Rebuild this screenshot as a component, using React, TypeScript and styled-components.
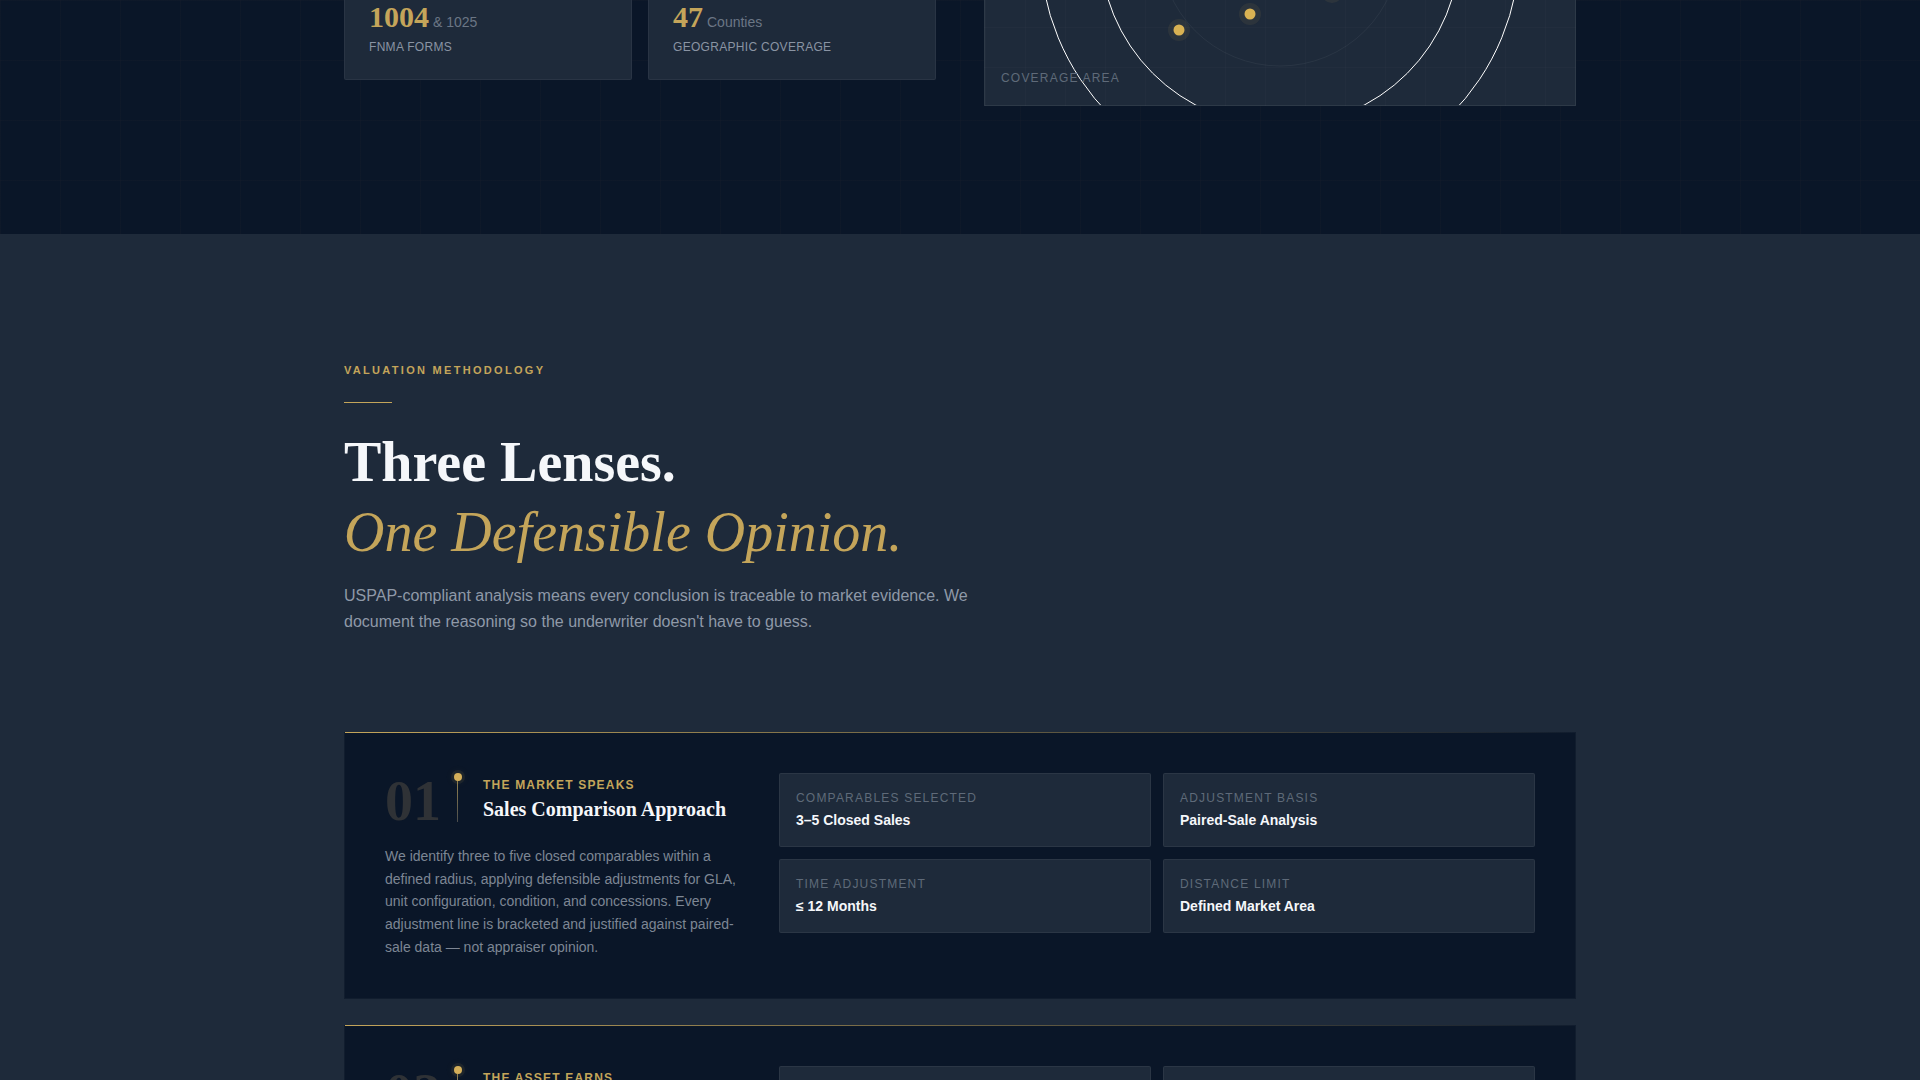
import React from "react";
import styled, { createGlobalStyle } from "styled-components";

const GlobalStyle = createGlobalStyle`
  html, body {
    margin: 0;
    padding: 0;
    background: #1e2a3a;
    font-family: "Liberation Sans", Arial, sans-serif;
  }
  * {
    box-sizing: border-box;
  }
`;

const Viewport = styled.div`
  height: 100vh;
  overflow: hidden;
`;

const Hero = styled.section`
  margin-top: -240px;
  padding: 26px 0 128px;
  background-color: #0a1628;
  background-image: linear-gradient(rgba(201, 165, 92, 0.025) 1px, transparent 1px),
    linear-gradient(90deg, rgba(201, 165, 92, 0.025) 1px, transparent 1px);
  background-size: 60px 60px;
`;

const Container = styled.div`
  width: 1280px;
  margin: 0 auto;
  padding: 0 24px;
`;

const HeroGrid = styled.div`
  display: grid;
  grid-template-columns: 1fr 1fr;
  gap: 48px;
`;

const StatColumn = styled.div`
  align-self: end;
  padding-bottom: 26px;
  display: grid;
  grid-template-columns: 1fr 1fr;
  gap: 16px;
`;

const StatCard = styled.div`
  padding: 24px 24px 23px;
  background: #1e2a3a;
  border: 1px solid rgba(255, 255, 255, 0.05);
  border-radius: 2px;
`;

const StatValue = styled.div`
  font-family: "Liberation Serif", "Times New Roman", serif;
  font-size: 30px;
  font-weight: 700;
  line-height: 32px;
  color: #c4a55a;
`;

const StatUnit = styled.span`
  margin-left: 4px;
  font-family: "Liberation Sans", Arial, sans-serif;
  font-size: 14px;
  font-weight: 400;
  color: #6b7685;
`;

const StatLabel = styled.div`
  font-size: 12px;
  line-height: 18px;
  letter-spacing: 0.3px;
  color: #8a94a3;
`;

const MapPanel = styled.div`
  position: relative;
  height: 320px;
  overflow: hidden;
  background-color: #1e2a3a;
  background-image: linear-gradient(rgba(255, 255, 255, 0.015) 1px, transparent 1px),
    linear-gradient(90deg, rgba(255, 255, 255, 0.015) 1px, transparent 1px);
  background-size: 40px 40px;
  border: 1px solid rgba(255, 255, 255, 0.07);
`;

const MapLabel = styled.span`
  position: absolute;
  left: 16px;
  bottom: 20px;
  font-size: 12px;
  line-height: 14px;
  letter-spacing: 1.2px;
  color: #5f6a79;
`;

const Methodology = styled.section`
  padding: 128px 0 0;
  background: #1e2a3a;
`;

const Eyebrow = styled.div`
  font-size: 11px;
  font-weight: 700;
  line-height: 16px;
  letter-spacing: 2.3px;
  color: #c4a55a;
`;

const Rule = styled.div`
  width: 48px;
  height: 1px;
  margin: 24px 0;
  background: #c4a55a;
`;

const Title = styled.h2`
  margin: 0;
  font-family: "Liberation Serif", "Times New Roman", serif;
  font-size: 56px;
  font-weight: 700;
  line-height: 70px;
  color: #f5f7fa;
`;

const TitleAccent = styled.em`
  display: block;
  font-weight: 400;
  color: #c4a55a;
`;

const Lead = styled.p`
  max-width: 640px;
  margin: 16px 0 0;
  font-size: 16px;
  line-height: 25.6px;
  color: #8f99a8;
`;

const MethodList = styled.div`
  display: flex;
  flex-direction: column;
  gap: 26px;
  margin-top: 98px;
`;

const MethodCard = styled.article`
  position: relative;
  display: grid;
  grid-template-columns: 354px 1fr;
  gap: 40px;
  padding: 40px;
  background: #0a1628;
  border: 1px solid rgba(255, 255, 255, 0.03);

  &::before {
    content: "";
    position: absolute;
    top: -1px;
    left: 0;
    right: 0;
    height: 1px;
    background: linear-gradient(90deg, #c4a55a, rgba(196, 165, 90, 0));
  }
`;

const MethodHead = styled.div`
  display: flex;
  align-items: flex-start;
  min-height: 60px;
`;

const MethodNumber = styled.div`
  width: 56px;
  margin-right: 12px;
  font-family: "Liberation Serif", "Times New Roman", serif;
  font-size: 56px;
  font-weight: 700;
  line-height: 56px;
  color: #2f3236;
`;

const Pin = styled.div`
  flex: none;
  display: flex;
  flex-direction: column;
  align-items: center;
  width: 10px;
  height: 49px;
  margin-right: 20px;
`;

const PinDot = styled.span`
  flex: none;
  width: 8px;
  height: 8px;
  border-radius: 50%;
  background: #d4af5a;
  box-shadow: 0 0 0 3px rgba(212, 175, 90, 0.08), 0 0 10px rgba(212, 175, 90, 0.15);
`;

const PinLine = styled.span`
  flex: 1;
  width: 1px;
  margin-right: 1px;
  background: linear-gradient(180deg, #93814f, #4a4d4d);
`;

const MethodHeading = styled.div`
  padding-top: 4px;
`;

const MethodKicker = styled.div`
  font-size: 12px;
  font-weight: 700;
  line-height: 16px;
  letter-spacing: 1.2px;
  color: #c4a55a;
`;

const MethodName = styled.h3`
  margin: 3px 0 0;
  font-family: "Liberation Serif", "Times New Roman", serif;
  font-size: 20px;
  font-weight: 700;
  line-height: 26px;
  color: #f5f7fa;
`;

const MethodText = styled.p`
  margin: 12px 0 0;
  font-size: 14px;
  line-height: 22.6px;
  color: #7d8694;
`;

const FactGrid = styled.div`
  display: grid;
  grid-template-columns: 1fr 1fr;
  grid-auto-rows: 74px;
  gap: 12px;
  align-content: start;
`;

const Fact = styled.div`
  padding: 16px;
  background: #1e2a3a;
  border: 1px solid rgba(255, 255, 255, 0.06);
  border-radius: 2px;
`;

const FactLabel = styled.div`
  font-size: 12px;
  line-height: 16px;
  letter-spacing: 1.2px;
  color: #5f6a79;
`;

const FactValue = styled.div`
  margin-top: 5px;
  font-size: 14px;
  font-weight: 700;
  line-height: 18px;
  color: #f5f7fa;
`;

const methods = [
  {
    number: "01",
    kicker: "THE MARKET SPEAKS",
    name: "Sales Comparison Approach",
    text: "We identify three to five closed comparables within a defined radius, applying defensible adjustments for GLA, unit configuration, condition, and concessions. Every adjustment line is bracketed and justified against paired-sale data — not appraiser opinion.",
    facts: [
      ["COMPARABLES SELECTED", "3–5 Closed Sales"],
      ["ADJUSTMENT BASIS", "Paired-Sale Analysis"],
      ["TIME ADJUSTMENT", "≤ 12 Months"],
      ["DISTANCE LIMIT", "Defined Market Area"],
    ],
  },
  {
    number: "02",
    kicker: "THE ASSET EARNS",
    name: "Income Approach",
    text: "",
    facts: [
      ["", ""],
      ["", ""],
    ],
  },
];

function CoverageMap() {
  const rings = [
    { r: 240, opacity: 1 },
    { r: 180, opacity: 1 },
    { r: 120, opacity: 0.05 },
  ];
  const sites = [
    [194, 243],
    [265, 227],
    [347, 205],
  ];
  return (
    <svg width="590" height="318" viewBox="0 0 590 318" fill="none">
      {rings.map((ring) => (
        <circle key={ring.r} cx="295" cy="159" r={ring.r} stroke="#fff" strokeOpacity={ring.opacity} />
      ))}
      {sites.map(([cx, cy]) => (
        <g key={cx}>
          <circle cx={cx} cy={cy} r="11" fill="#d4af5a" fillOpacity="0.08" />
          <circle cx={cx} cy={cy} r="5.5" fill="#d9b253" />
        </g>
      ))}
    </svg>
  );
}

export default function App() {
  return (
    <Viewport>
      <GlobalStyle />
      <Hero>
        <Container>
          <HeroGrid>
            <StatColumn>
              <StatCard>
                <StatValue>
                  1004<StatUnit>&amp; 1025</StatUnit>
                </StatValue>
                <StatLabel>FNMA FORMS</StatLabel>
              </StatCard>
              <StatCard>
                <StatValue>
                  47<StatUnit>Counties</StatUnit>
                </StatValue>
                <StatLabel>GEOGRAPHIC COVERAGE</StatLabel>
              </StatCard>
            </StatColumn>
            <MapPanel>
              <CoverageMap />
              <MapLabel>COVERAGE AREA</MapLabel>
            </MapPanel>
          </HeroGrid>
        </Container>
      </Hero>
      <Methodology>
        <Container>
          <Eyebrow>VALUATION METHODOLOGY</Eyebrow>
          <Rule />
          <Title>
            Three Lenses.
            <TitleAccent>One Defensible Opinion.</TitleAccent>
          </Title>
          <Lead>
            USPAP-compliant analysis means every conclusion is traceable to market evidence. We document the reasoning
            so the underwriter doesn't have to guess.
          </Lead>
          <MethodList>
            {methods.map((method) => (
              <MethodCard key={method.number}>
                <div>
                  <MethodHead>
                    <MethodNumber>{method.number}</MethodNumber>
                    <Pin>
                      <PinDot />
                      <PinLine />
                    </Pin>
                    <MethodHeading>
                      <MethodKicker>{method.kicker}</MethodKicker>
                      <MethodName>{method.name}</MethodName>
                    </MethodHeading>
                  </MethodHead>
                  <MethodText>{method.text}</MethodText>
                </div>
                <FactGrid>
                  {method.facts.map(([label, value], index) => (
                    <Fact key={index}>
                      <FactLabel>{label}</FactLabel>
                      <FactValue>{value}</FactValue>
                    </Fact>
                  ))}
                </FactGrid>
              </MethodCard>
            ))}
          </MethodList>
        </Container>
      </Methodology>
    </Viewport>
  );
}
